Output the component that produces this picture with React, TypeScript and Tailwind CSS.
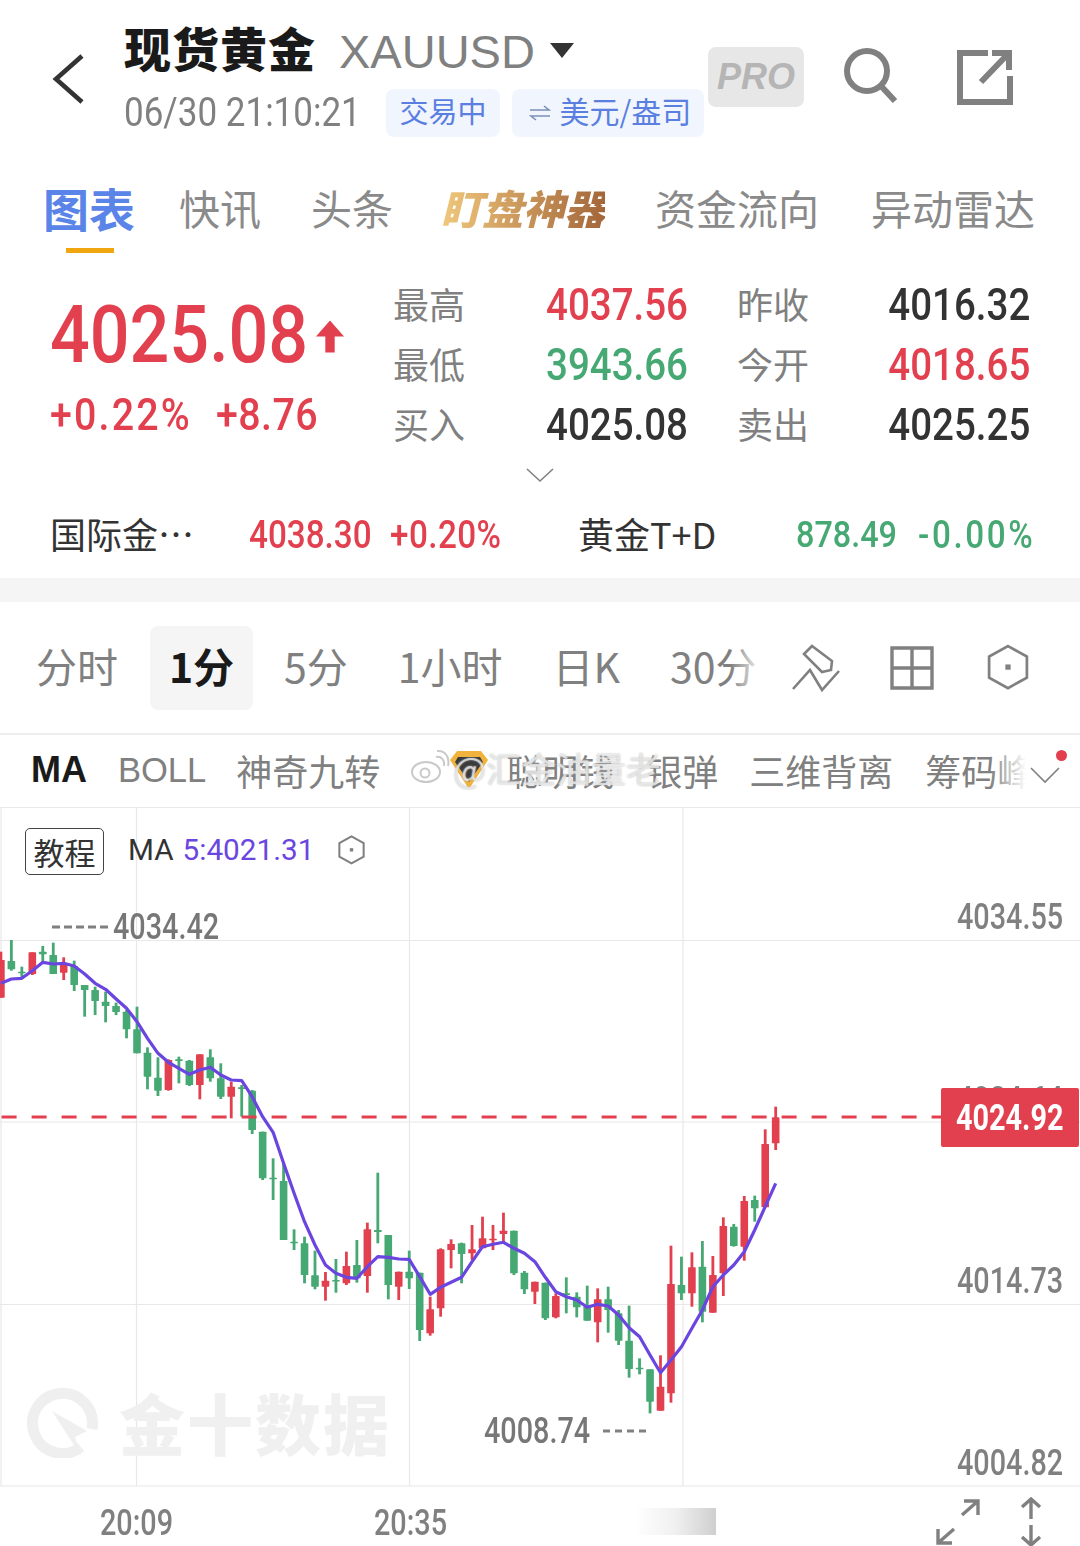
import type { ReactNode } from "react";

const RED = "#e2404f";
const GREEN = "#46a873";
const PURPLE = "#6a45e0";

type Candle = [number, number, number, number, 0 | 1]; // wickTop, bodyTop, bodyBottom, wickBottom, isRed

// session candles in 1/3 px units; first run starts at y=900, second at y=1080
const firstRun: Candle[] = [
  [155, 180, 293, 293, 1], [120, 183, 208, 212, 0], [200, 215, 218, 235, 0], [157, 157, 222, 225, 1],
  [138, 155, 163, 185, 0], [128, 165, 222, 222, 0], [172, 190, 218, 240, 1], [182, 198, 255, 273, 0],
  [255, 255, 270, 350, 0], [260, 270, 303, 345, 0], [275, 305, 318, 367, 0], [308, 318, 336, 345, 0],
  [330, 335, 388, 415, 0], [320, 388, 460, 460, 0], [442, 458, 530, 568, 0], [472, 533, 572, 588, 0],
  [478, 480, 570, 572, 1], [470, 478, 482, 550, 0], [480, 482, 555, 558, 0], [463, 463, 555, 598, 1],
  [448, 472, 535, 545, 0], [490, 535, 590, 597, 0], [545, 560, 590, 655, 1], [555, 562, 566, 650, 0],
  [570, 572, 690, 702, 0], [695, 695, 835, 840, 0], [775, 833, 836, 900, 0], [790, 843, 1020, 1020, 0],
  [988, 1025, 1030, 1050, 0], [1010, 1030, 1125, 1150, 0], [1052, 1126, 1160, 1168, 0], [1116, 1142, 1160, 1202, 1],
  [1077, 1140, 1144, 1178, 0], [1055, 1098, 1150, 1155, 1], [1020, 1095, 1135, 1148, 0], [968, 988, 1128, 1178, 1],
  [818, 990, 996, 1030, 0], [1005, 1005, 1155, 1198, 0],
];
const secondRun: Candle[] = [
  [575, 575, 620, 660, 1], [512, 575, 595, 627, 0], [578, 578, 750, 783, 0], [650, 688, 760, 767, 1],
  [505, 508, 685, 710, 1], [478, 492, 510, 565, 1], [488, 490, 522, 610, 0], [435, 508, 520, 540, 1],
  [410, 475, 505, 505, 1], [435, 476, 479, 510, 1], [398, 452, 462, 490, 1], [452, 452, 580, 585, 0],
  [573, 578, 628, 642, 0], [605, 605, 635, 672, 1], [608, 608, 715, 720, 0], [640, 648, 712, 715, 1],
  [592, 640, 643, 700, 0], [637, 650, 682, 712, 0], [617, 680, 722, 722, 0], [625, 658, 727, 787, 1],
  [620, 658, 690, 758, 0], [690, 700, 782, 795, 0], [677, 782, 867, 893, 0], [835, 863, 866, 883, 0],
  [868, 868, 965, 1000, 0], [826, 920, 992, 992, 1], [497, 612, 940, 968, 1], [530, 615, 640, 660, 0],
  [517, 562, 640, 680, 1], [483, 560, 695, 727, 0], [528, 585, 698, 698, 1], [412, 438, 580, 648, 1],
  [432, 440, 498, 500, 0], [348, 363, 500, 542, 1], [347, 360, 385, 425, 0], [148, 192, 382, 382, 1],
  [80, 112, 190, 210, 1],
];
const ma5First = [250, 237, 235, 212, 187, 192, 190, 198, 222, 250, 268, 297, 325, 365, 415, 460, 487, 505, 523, 510, 502, 525, 540, 542, 590, 650, 697, 790, 880, 965, 1035, 1095, 1120, 1132, 1135, 1100, 1070, 1072];
const ma5Second = [537, 538, 590, 643, 622, 607, 592, 545, 500, 493, 487, 505, 520, 545, 592, 635, 650, 660, 682, 673, 678, 705, 743, 770, 825, 878, 840, 800, 745, 690, 620, 585, 555, 515, 450, 380, 310];

const STEP = 10.47;
const xAt = (i: number) => 0.9 + i * STEP;

const candles = [
  ...firstRun.map((c, i) => ({ x: xAt(i), y: c.slice(0, 4).map((v) => 900 + (v as number) / 3), red: c[4] === 1 })),
  ...secondRun.map((c, i) => ({ x: xAt(i + 38), y: c.slice(0, 4).map((v) => 1080 + (v as number) / 3), red: c[4] === 1 })),
];
const maLine = [
  ...ma5First.map((v, i) => `${xAt(i).toFixed(1)},${(900 + v / 3).toFixed(1)}`),
  ...ma5Second.map((v, i) => `${xAt(i + 38).toFixed(1)},${(1080 + v / 3).toFixed(1)}`),
].join(" ");

const cjk = "font-['Noto_Sans_CJK_SC','Noto_Sans',sans-serif]";
const num = "font-['Roboto',sans-serif]";

function Narrow({ children, className = "", right = false, tight = false }: { children: ReactNode; className?: string; right?: boolean; tight?: boolean }) {
  return (
    <span className={`${num} inline-block whitespace-nowrap ${tight ? "scale-x-[0.8]" : "scale-x-[0.875]"} ${right ? "origin-right" : "origin-left"} ${className}`}>
      {children}
    </span>
  );
}

function Quote({ label, value, color, label2, value2, color2 }: { label: string; value: string; color: string; label2: string; value2: string; color2: string }) {
  return (
    <div className="flex h-[60px] items-center">
      <div className="mb-[5px] w-[153px] text-[36px] leading-none text-[#808080]">{label}</div>
      <div className="w-[191px]">
        <Narrow className={`text-[44px] leading-none font-medium ${color}`}>{value}</Narrow>
      </div>
      <div className="mb-[5px] w-[100px] text-[36px] leading-none text-[#808080]">{label2}</div>
      <div className="w-[193px] text-right">
        <Narrow right className={`text-[44px] leading-none font-medium ${color2}`}>{value2}</Narrow>
      </div>
    </div>
  );
}

function HexIcon({ size, stroke = 2.6 }: { size: number; stroke?: number }) {
  return (
    <svg width={size} height={size * 1.1} viewBox="0 0 40 44" fill="none" stroke="#808080" strokeWidth={stroke}>
      <path d="M20 2 38 12v20L20 42 2 32V12z" />
      <rect x="17.5" y="19.5" width="5" height="5" fill="#808080" stroke="none" />
    </svg>
  );
}

function Dashes({ width, dash }: { width: number; dash: string }) {
  return (
    <svg width={width} height="4" viewBox={`0 0 ${width} 4`}>
      <line x1="0" x2={width} y1="2" y2="2" stroke="#808080" strokeWidth="3" strokeDasharray={dash} />
    </svg>
  );
}

function CandleChart() {
  return (
    <svg className="absolute left-0 top-0" width="1080" height="680" viewBox="0 807 1080 680">
      {[807.5, 940.5, 1122, 1304.5, 1486].map((y) => (
        <line key={y} x1="0" x2="1080" y1={y} y2={y} stroke="#e8e8e8" strokeWidth="1.2" />
      ))}
      {[1, 136.5, 409.5, 683].map((x) => (
        <line key={x} x1={x} x2={x} y1="807" y2="1486" stroke="#e8e8e8" strokeWidth="1.2" />
      ))}
      {candles.map((c, i) => (
        <g key={i} fill={c.red ? RED : GREEN}>
          <rect x={c.x - 1.4} y={c.y[0]} width="2.8" height={c.y[3] - c.y[0]} />
          <rect x={c.x - 3.8} y={c.y[1]} width="7.6" height={Math.max(c.y[2] - c.y[1], 1.6)} rx="0.6" />
        </g>
      ))}
      <line x1="1.6" x2="941" y1="1117" y2="1117" stroke={RED} strokeWidth="3" strokeDasharray="15 15" />
      <polyline points={maLine} fill="none" stroke={PURPLE} strokeWidth="3.2" strokeLinejoin="round" />
    </svg>
  );
}

export default function App() {
  return (
    <div className={`relative h-[1546px] w-[1080px] overflow-hidden bg-white ${cjk}`}>
      {/* header */}
      <div className="flex h-[150px]">
        <div className="ml-[52px] mt-[54px] w-[72px]">
          <svg width="34" height="50" viewBox="0 0 34 50" fill="none" stroke="#333" strokeWidth="4.6">
            <path d="M30 2 4 25l26 23" />
          </svg>
        </div>
        <div className="w-[584px]">
          <div className="mt-[18px] flex h-[56px] items-center">
            <span className="text-[47px] leading-none font-black tracking-[1px] text-[#1a1a1a]">现货黄金</span>
            <span className="ml-[23px] mt-[10px] font-['Liberation_Sans',sans-serif] text-[47px] leading-none text-[#808080]">XAUUSD</span>
            <svg className="ml-[15px] mt-[8px]" width="24" height="15" viewBox="0 0 24 15" fill="#333">
              <path d="M0 0h24L12 15z" />
            </svg>
          </div>
          <div className="mt-[15px] flex items-center">
            <Narrow className="w-[262px] text-[40px] leading-none text-[#808080]">06/30 21:10:21</Narrow>
            <span className="flex h-[48px] w-[114px] items-center justify-center rounded-[8px] bg-[#f0f5fe] pb-[6px] text-[29px] leading-none text-[#5a7fe0]">交易中</span>
            <span className="ml-[12px] flex h-[48px] w-[192px] items-center justify-center rounded-[8px] bg-[#f0f5fe] pb-[6px] pl-[4px] text-[30px] leading-none text-[#5a7fe0]">
              <svg className="mr-[9px] mt-[6px]" width="22" height="18" viewBox="0 0 22 18" fill="none" stroke="#7d8fb8" strokeWidth="1.6">
                <path d="M1 6h19l-5-4M21 12H2l5 4" />
              </svg>
              美元/盎司
            </span>
          </div>
        </div>
        <div className="mt-[47px] flex h-[60px] w-[96px] items-center justify-center rounded-[8px] bg-[#e7e7e7]">
          <span className="font-['Liberation_Sans',sans-serif] text-[36px] leading-none font-bold italic text-[#b5b5b5]">PRO</span>
        </div>
        <svg className="ml-[38px] mt-[47px]" width="56" height="56" viewBox="0 0 56 56" fill="none" stroke="#808080" strokeWidth="6">
          <circle cx="25" cy="24" r="20" />
          <path d="m39 39 14 15" />
        </svg>
        <svg className="ml-[59px] mt-[49px]" width="56" height="56" viewBox="0 0 56 56" fill="none" stroke="#808080" strokeWidth="6">
          <path d="M31 4H3v49h50V27" />
          <path d="m24 33 26-27M35 4h17v17" />
        </svg>
      </div>

      {/* section tabs */}
      <div className="flex h-[112px] flex-col">
        <div className="flex h-[98px] items-center pt-[16px] text-[41px] leading-none text-[#8a8a8a]">
          <span className="ml-[43px] text-[46px] font-bold text-[#5b84e8]">图表</span>
          <span className="ml-[44px]">快讯</span>
          <span className="ml-[50px]">头条</span>
          <span className="ml-[48px] bg-linear-to-r from-[#f0c87c] to-[#a3663a] bg-clip-text font-black italic text-transparent">盯盘神器</span>
          <span className="ml-[50px]">资金流向</span>
          <span className="ml-[52px]">异动雷达</span>
        </div>
        <div className="ml-[66px] h-[5px] w-[48px] bg-[#f0a70f]" />
      </div>

      {/* price block */}
      <div className="flex h-[206px]">
        <div className="w-[393px] pl-[50px]">
          <div className="flex h-[106px] items-center pt-[40px]">
            <Narrow className="w-[265px] text-[80px] leading-none font-medium text-[#e2404f]">4025.08</Narrow>
            <svg className="mb-[-2px]" width="30" height="33" viewBox="0 0 32 34" fill={RED}>
              <path d="M16 0 31 17H21v17H11V17H1z" />
            </svg>
          </div>
          <div className="mt-[24px] flex items-center text-[#e2404f]">
            <Narrow className="w-[166px] text-[45px] leading-none font-medium tracking-[2.5px]">+0.22%</Narrow>
            <Narrow className="text-[45px] leading-none font-medium tracking-[0.5px]">+8.76</Narrow>
          </div>
        </div>
        <div className="relative pt-[13px]">
          <Quote label="最高" value="4037.56" color="text-[#e2404f]" label2="昨收" value2="4016.32" color2="text-[#333]" />
          <Quote label="最低" value="3943.66" color="text-[#46a873]" label2="今开" value2="4018.65" color2="text-[#e2404f]" />
          <Quote label="买入" value="4025.08" color="text-[#333]" label2="卖出" value2="4025.25" color2="text-[#333]" />
          <svg className="absolute left-[132px] top-[205px]" width="30" height="16" viewBox="0 0 30 16" fill="none" stroke="#808080" strokeWidth="1.6">
            <path d="m2 2 13 12L28 2" />
          </svg>
        </div>
      </div>

      {/* related contracts */}
      <div className="flex h-[110px] items-start pt-[45px]">
        <span className="ml-[50px] -mt-[2px] w-[199px] text-[36px] leading-[44px] text-[#333]">国际金⋯</span>
        <Narrow className="w-[141px] text-[38px] leading-[44px] font-medium text-[#e2404f]">4038.30</Narrow>
        <Narrow className="w-[188px] text-[38px] leading-[44px] font-medium tracking-[0.5px] text-[#e2404f]">+0.20%</Narrow>
        <span className="-mt-[2px] w-[218px] text-[36px] leading-[44px] text-[#333]">黄金T+D</span>
        <Narrow className="w-[122px] text-[37px] leading-[44px] font-medium text-[#46a873]">878.49</Narrow>
        <Narrow className="text-[38px] leading-[44px] font-medium tracking-[3px] text-[#46a873]">-0.00%</Narrow>
      </div>
      <div className="h-[24px] bg-[#f5f5f5]" />

      {/* period row */}
      <div className="relative flex h-[133px] items-center border-b-2 border-[#eeeeee] pb-[4px] text-[41px] leading-none text-[#808080]">
        <span className="ml-[36px]">分时</span>
        <span className="ml-[32px] mt-[4px] flex h-[84px] w-[103px] items-center justify-center rounded-[8px] bg-[#f5f5f5] pb-[4px] font-bold text-[#1a1a1a]">1分</span>
        <span className="ml-[31px]">5分</span>
        <span className="ml-[50px]">1小时</span>
        <span className="ml-[50px]">日K</span>
        <span className="ml-[50px]">30分</span>
        <div className="absolute left-[730px] top-[40px] h-[50px] w-[34px] bg-linear-to-r from-white/0 to-white" />
        <svg className="absolute left-[792px] top-[41px]" width="48" height="50" viewBox="0 0 48 50" fill="none" stroke="#808080" strokeWidth="2.6">
          <path d="m20 3-8 8 18 18 9-2 1-9z" />
          <path d="M1 46 18 27l12 20 17-19" />
        </svg>
        <svg className="absolute left-[890px] top-[44px]" width="44" height="44" viewBox="0 0 44 44" fill="none" stroke="#808080" strokeWidth="3.4">
          <path d="M2 2h40v40H2zM22 2v40M2 22h40" />
        </svg>
        <div className="absolute left-[987px] top-[42px]">
          <HexIcon size={42} />
        </div>
      </div>

      {/* indicator row */}
      <div className="relative flex h-[72px] items-center pb-[2px] text-[36px] leading-none text-[#808080]">
        <span className="ml-[31px] font-['Liberation_Sans',sans-serif] font-bold text-[#1a1a1a]">MA</span>
        <span className="ml-[31px] font-['Liberation_Sans',sans-serif] text-[34.5px]">BOLL</span>
        <span className="ml-[30px]">神奇九转</span>
        <svg className="ml-[69px]" width="40" height="40" viewBox="0 0 40 40">
          <path d="M8 1h24l7 9-19 29L1 10z" fill="#f2b33d" />
          <path d="M9 7h22l3 5-14 20L6 12z" fill="#3a3a3a" />
        </svg>
        <span className="ml-[17px]">聪明钱</span>
        <span className="ml-[32px]">银弹</span>
        <span className="ml-[31px]">三维背离</span>
        <span className="ml-[32px]">筹码峰</span>
        <div className="absolute left-[990px] top-[10px] h-[50px] w-[36px] bg-linear-to-r from-white/0 to-white" />
        <div className="absolute left-[1026px] top-[10px] h-[50px] w-[54px] bg-white" />
        <svg className="absolute left-[1030px] top-[31px]" width="30" height="18" viewBox="0 0 30 18" fill="none" stroke="#808080" strokeWidth="1.6">
          <path d="m1 2 14 14L29 2" />
        </svg>
        <div className="absolute left-[1056px] top-[15px] h-[11px] w-[11px] rounded-full bg-[#e2404f]" />
        {/* weibo mark lying over the row */}
        <div className="absolute left-[410px] top-[14px] flex items-center">
          <svg width="40" height="36" viewBox="0 0 40 36" fill="none" stroke="#c9c9c9" strokeWidth="2">
            <ellipse cx="16" cy="23" rx="14" ry="10" />
            <circle cx="15" cy="24" r="4.5" />
            <path d="M26 8c5-1 9 3 8 9M27 2c8-1 13 6 11 15" />
          </svg>
          <span className="ml-[3px] text-[35px] text-white/60 [text-shadow:0_0_2px_#b0b0b0]">@汇金油量老</span>
        </div>
      </div>

      {/* chart and axis */}
      <div className="relative h-[739px]">
        <CandleChart />
        <div className="absolute left-[25px] top-[21px] flex h-[47px] w-[79px] items-center justify-center rounded-[5px] border border-[#444] text-[31px] leading-none text-[#333]">教程</div>
        <div className="absolute left-[128px] top-[26px] flex h-[34px] items-center font-['Roboto',sans-serif] text-[29.7px] leading-none text-[#333]">
          <span>MA</span>
          <span className="ml-[9px] text-[#6a45e0]">5:4021.31</span>
          <div className="ml-[24px]">
            <HexIcon size={27} stroke={3} />
          </div>
        </div>

        {/* watermark */}
        <div className="absolute left-[27px] top-[577px] flex items-center">
          <svg width="72" height="74" viewBox="0 0 72 74" fill="none">
            <path d="M54 63A30 30 0 1 1 65 45" stroke="#efefef" strokeWidth="11" />
            <path d="M25 27 60 47 48 53 54 72z" fill="#efefef" />
          </svg>
          <span className="ml-[20px] text-[66px] leading-none font-black tracking-[2px] text-[#f0f0f0]">金十数据</span>
        </div>

        {/* price labels */}
        <div className="absolute left-[52px] top-[102px] flex items-center">
          <Dashes width={56} dash="8 4" />
          <Narrow tight className="ml-[5px] text-[36px] leading-none font-medium text-[#777]">4034.42</Narrow>
        </div>
        <div className="absolute left-[484px] top-[606px] flex items-center">
          <Narrow tight className="w-[119px] text-[36px] leading-none font-medium text-[#777]">4008.74</Narrow>
          <Dashes width={43} dash="7 5" />
        </div>
        <Narrow tight className="absolute left-[957px] top-[92px] text-[36px] leading-none font-medium text-[#808080]">4034.55</Narrow>
        <Narrow tight className="absolute left-[957px] top-[275px] text-[36px] leading-none font-medium text-[#808080]">4024.64</Narrow>
        <Narrow tight className="absolute left-[957px] top-[456px] text-[36px] leading-none font-medium text-[#808080]">4014.73</Narrow>
        <Narrow tight className="absolute left-[957px] top-[638px] text-[36px] leading-none font-medium text-[#808080]">4004.82</Narrow>
        <div className="absolute left-[941px] top-[281px] flex h-[59px] w-[138px] items-center rounded-[2px] bg-[#e2404f] pl-[15px]">
          <Narrow tight className="text-[36px] leading-none font-bold text-white">4024.92</Narrow>
        </div>

        {/* time axis */}
        <Narrow tight className="absolute left-[100px] top-[698px] text-[36px] leading-none font-medium text-[#808080]">20:09</Narrow>
        <Narrow tight className="absolute left-[374px] top-[698px] text-[36px] leading-none font-medium text-[#808080]">20:35</Narrow>
        <div className="absolute left-[635px] top-[701px] h-[27px] w-[81px] bg-linear-to-r from-white via-[#f0f0f0] to-[#cfcfcf]" />
        <svg className="absolute left-[936px] top-[692px]" width="44" height="46" viewBox="0 0 44 46" fill="none" stroke="#808080" strokeWidth="3.4">
          <path d="M26 16 42 2M28 2h14v14M18 30 2 44M2 30v14h14" />
        </svg>
        <svg className="absolute left-[1019px] top-[690px]" width="24" height="50" viewBox="0 0 24 50" fill="none" stroke="#808080" strokeWidth="3.4">
          <path d="M12 22V2M3 10l9-8 9 8M12 28v20M3 40l9 8 9-8" />
        </svg>
      </div>
    </div>
  );
}
